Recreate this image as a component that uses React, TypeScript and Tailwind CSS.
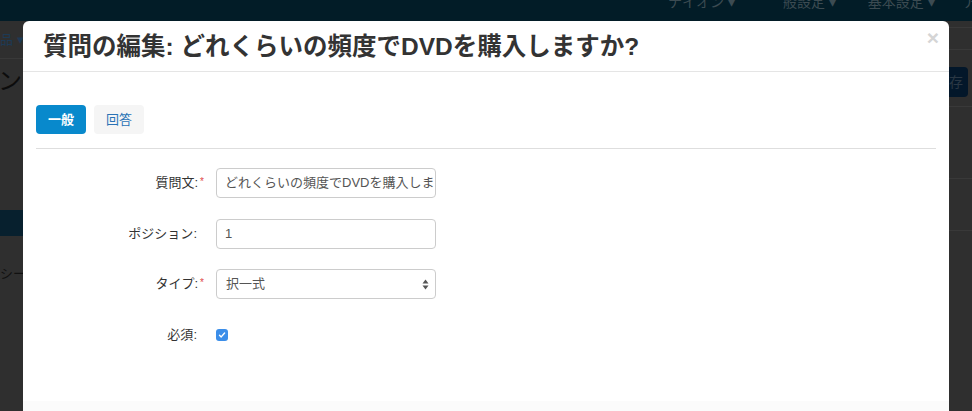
import React from 'react'

const font = { fontFamily: '"Liberation Sans", "Noto Sans CJK JP", sans-serif' }

function Field({ label, required, children }: { label: string; required?: boolean; children: React.ReactNode }) {
  return (
    <>
      <div className={`flex items-center justify-end h-[30px] text-[13px] text-[#333] ${required ? '' : 'pr-[7px]'}`}>
        {label}:{required && <span className="text-[#e04848] text-[10px] ml-[2px] -mt-[3px]">*</span>}
      </div>
      <div className="flex items-center h-[30px]">{children}</div>
    </>
  )
}

export default function App() {
  return (
    <div className="relative h-[411px] w-[972px] overflow-hidden bg-[#2f2f2f]" style={font}>
      {/* page behind the overlay */}
      <div className="h-[21px] bg-[#021c27] flex items-start text-[14px] text-[#3c4b52] overflow-hidden whitespace-nowrap">
        <span className="ml-[668px] -mt-[8px]">ナイオン ▾</span>
        <span className="ml-[48px] -mt-[8px]">般設定 ▾</span>
        <span className="ml-[32px] -mt-[8px]">基本設定 ▾</span>
        <span className="ml-[28px] -mt-[8px]">ア</span>
      </div>
      <div className="flex justify-between">
        <div className="w-[23px] overflow-hidden">
          <div className="h-[38px] border-b border-[#393939] flex items-center text-[13px] text-[#1d3a55] whitespace-nowrap">品 ▾</div>
          <div className="h-[40px] flex items-end text-[24px] text-[#0c0c0c] whitespace-nowrap -ml-[2px]">ンタ</div>
          <div className="h-[111px]" />
          <div className="h-[26px] bg-[#07202e]" />
          <div className="h-[47px] flex items-end text-[13px] text-[#111] whitespace-nowrap">シー</div>
        </div>
        <div className="w-[23px] overflow-hidden">
          <div className="h-[7px] border-b border-[#393939]" />
          <div className="h-[22px] border-b border-[#393939]" />
          <div className="h-[17px]" />
          <div className="h-[30px] w-[19px] rounded-r-[4px] bg-[#03172a] text-[14px] text-[#2a3744] flex items-center">存</div>
          <div className="h-[10px] border-b border-[#393939]" />
          <div className="h-[72px] border-b border-[#393939]" />
          <div className="h-[52px] border-b border-[#393939]" />
        </div>
      </div>

      {/* modal */}
      <div className="absolute left-[23px] top-[21px] w-[926px] h-[420px] bg-white rounded-t-[6px] flex flex-col">
        <div className="relative h-[51px] border-b border-[#e5e5e5] flex items-center pl-[20px] pt-[2px]">
          <h1 className="text-[24.5px] font-bold text-[#333]">
            質問の編集: どれくらいの頻度でDVDを購入しますか?
          </h1>
          <span className="absolute right-[10px] top-[1px] text-[21px] font-bold text-[#d5d5d5]">×</span>
        </div>

        <div className="px-[13px] pt-[33px] h-[329px]">
          <div className="flex gap-[8px]">
            <button className="h-[29px] w-[50px] rounded-[4px] bg-[#0889cc] text-white text-[13px] font-bold">一般</button>
            <button className="h-[29px] w-[50px] rounded-[4px] bg-[#f5f5f5] text-[#2a72b5] text-[13px]">回答</button>
          </div>
          <div className="mt-[14px] border-t border-[#dedede]" />

          <div className="mt-[19px] grid grid-cols-[168px_220px] gap-x-[12px] gap-y-[20.5px]">
            <Field label="質問文" required>
              <div className="w-full h-full border border-[#ccc] rounded-[4px] px-[8px] flex items-center text-[13px] text-[#555] overflow-hidden whitespace-nowrap">
                どれくらいの頻度でDVDを購入しますか?
              </div>
            </Field>
            <Field label="ポジション">
              <div className="w-full h-full border border-[#ccc] rounded-[4px] px-[8px] flex items-center text-[13px] text-[#555]">1</div>
            </Field>
            <Field label="タイプ" required>
              <div className="w-full h-full border border-[#ccc] rounded-[4px] pl-[9px] pr-[6px] flex items-center justify-between text-[13px] text-[#555]">
                <span>択一式</span>
                <svg width="7" height="11" viewBox="0 0 7 11">
                  <path d="M3.5 0.5 L6.5 4.5 L0.5 4.5 Z" fill="#555" />
                  <path d="M3.5 10.5 L6.5 6.5 L0.5 6.5 Z" fill="#555" />
                </svg>
              </div>
            </Field>
            <Field label="必須">
              <span className="w-[12px] h-[12px] rounded-[3px] bg-[#3b8ee9] flex items-center justify-center">
                <svg width="8" height="8" viewBox="0 0 8 8">
                  <path d="M1.5 4.2 L3.2 5.9 L6.6 2" stroke="white" strokeWidth="1.4" fill="none" strokeLinecap="round" strokeLinejoin="round" />
                </svg>
              </span>
            </Field>
          </div>
        </div>
        <div className="flex-1 bg-[#fbfbfb]" />
      </div>
    </div>
  )
}
